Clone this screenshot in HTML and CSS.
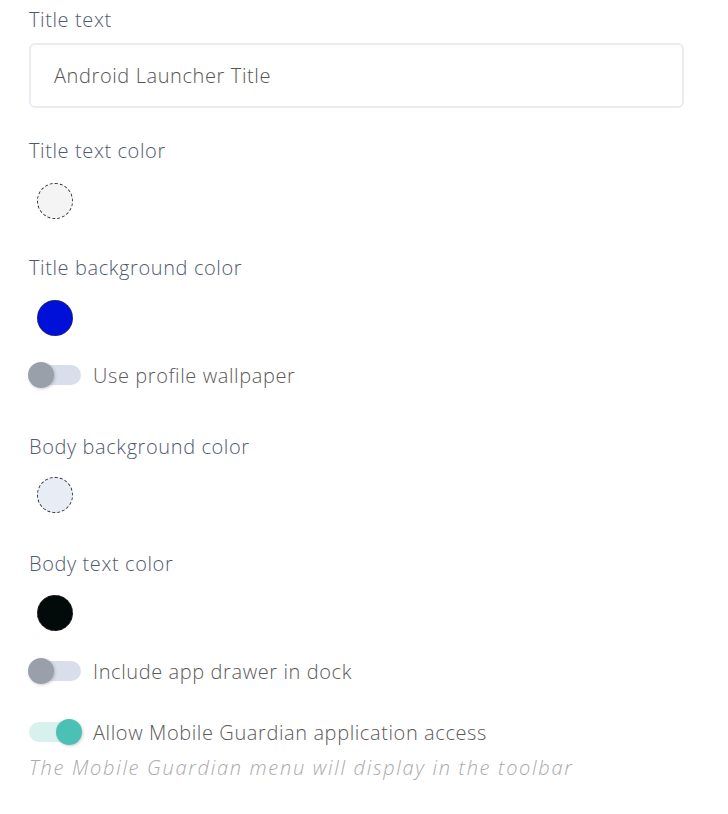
FILE: index.html
```html
<!DOCTYPE html>
<html>
<head>
<meta charset="utf-8">
<link rel="stylesheet" href="styles.css">
</head>
<body>
<div class="form">
  <div class="label first">Title text</div>
  <div class="input">Android Launcher Title</div>

  <div class="label after-input">Title text color</div>
  <div class="swatch" style="background:#f4f4f4"></div>

  <div class="label after-swatch">Title background color</div>
  <div class="swatch" style="background:#0010d8"></div>

  <div class="toggle-row after-swatch-toggle">
    <span class="toggle"><span class="thumb"></span></span>
    <span class="toggle-label">Use profile wallpaper</span>
  </div>

  <div class="label after-toggle">Body background color</div>
  <div class="swatch tight" style="background:#e8edf5"></div>

  <div class="label after-swatch-wide">Body text color</div>
  <div class="swatch mid" style="background:#020a0a"></div>

  <div class="toggle-row after-swatch-toggle-wide">
    <span class="toggle"><span class="thumb"></span></span>
    <span class="toggle-label">Include app drawer in dock</span>
  </div>

  <div class="toggle-row after-toggle-toggle">
    <span class="toggle on"><span class="thumb"></span></span>
    <span class="toggle-label">Allow Mobile Guardian application access</span>
  </div>
  <div class="hint">The Mobile Guardian menu will display in the toolbar</div>
</div>
</body>
</html>
```
FILE: styles.css
```css
html, body {
  margin: 0;
  padding: 0;
  background: #ffffff;
}
body {
  font-family: "Open Sans", "Noto Sans", sans-serif;
  font-weight: 300;
  letter-spacing: 0.6px;
}
.form {
  width: 655px;
  padding-left: 29px;
}
.label {
  font-size: 20px;
  line-height: 24px;
  height: 24px;
  color: #4f5a72;
}
.label.first { margin-top: 8px; }
.label.after-input { margin-top: 31px; }
.label.after-swatch { margin-top: 37px; }
.label.after-swatch-wide { margin-top: 39px; }
.label.after-toggle { margin-top: 47px; }

.input {
  margin-top: 11px;
  box-sizing: border-box;
  height: 65px;
  border: 2px solid #e9edf3;
  border-radius: 6px;
  padding-left: 23px;
  display: flex;
  align-items: center;
  font-size: 20px;
  color: #555555;
}

.swatch {
  margin-top: 20px;
  margin-left: 8px;
  width: 36px;
  height: 36px;
  box-sizing: border-box;
  border-radius: 50%;
  border: 1px dashed #333;
}
.swatch.tight { margin-top: 18px; }
.swatch.mid { margin-top: 19px; }

.toggle-row {
  display: flex;
  align-items: center;
  height: 26px;
}
.after-swatch-toggle { margin-top: 26px; }
.after-swatch-toggle-wide { margin-top: 27px; }
.after-toggle-toggle { margin-top: 35px; }

.toggle {
  position: relative;
  width: 52px;
  height: 20px;
  border-radius: 10px;
  background: #d9dfea;
  flex: none;
}
.toggle .thumb {
  position: absolute;
  left: -1px;
  top: -3px;
  width: 26px;
  height: 26px;
  border-radius: 50%;
  background: #99a0aa;
  box-shadow: 1px 1px 3px rgba(0,0,0,0.2);
}
.toggle.on { background: #d8f0ee; }
.toggle.on .thumb {
  left: 27px;
  background: #4bc1b5;
}
.toggle-label {
  margin-left: 12px;
  font-size: 20px;
  color: #5a5a5a;
}
.hint {
  margin-top: 11px;
  font-size: 20px;
  line-height: 24px;
  font-style: italic;
  letter-spacing: 1.7px;
  color: #aaaaaa;
}
```
